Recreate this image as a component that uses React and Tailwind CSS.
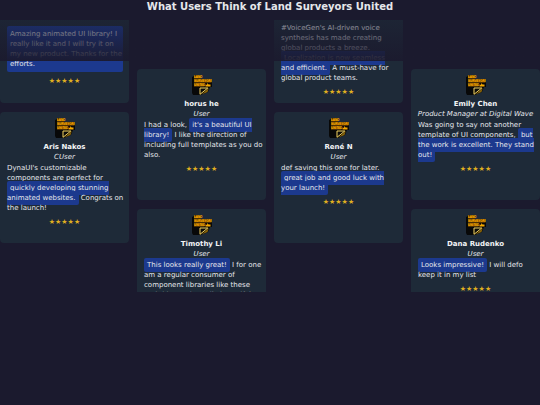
const Mark = ({ block = false, children }) => (
  <mark
    className={
      block
        ? "mt-[3px] mr-[-1px] block rounded-[2px] bg-blue-900 p-[3px] text-gray-200"
        : "rounded-[2px] bg-blue-900 p-[3px] text-gray-200"
    }
  >
    {children}
  </mark>
);

const columns = [
  {
    id: "first",
    raised: true,
    reviews: [
      {
        id: "animated-library",
        body: (
          <Mark block>
            Amazing animated UI library! I<br />
            really like it and I will try it on<br />
            my new product. Thanks for the<br />
            efforts.
          </Mark>
        )
      },
      {
        id: "aris",
        name: "Aris Nakos",
        role: "CUser",
        body: (
          <>
            DynaUI's customizable<br />
            components are perfect for<br />
            <Mark>
              quickly developing stunning<br />
              animated websites.
            </Mark>{" "}
            Congrats on<br />
            the launch!
          </>
        )
      }
    ]
  },
  {
    id: "second",
    raised: false,
    reviews: [
      {
        id: "horus",
        name: "horus he",
        role: "User",
        body: (
          <>
            I had a look,{" "}
            <Mark>
              it's a beautiful UI<br />
              library!
            </Mark>{" "}
            I like the direction of<br />
            including full templates as you do<br />
            also.
          </>
        )
      },
      {
        id: "timothy",
        name: "Timothy Li",
        role: "User",
        body: (
          <>
            <Mark>This looks really great!</Mark> I for one<br />
            am a regular consumer of<br />
            component libraries like these<br />
            and this one is easily beautiful
          </>
        )
      }
    ]
  },
  {
    id: "third",
    raised: true,
    reviews: [
      {
        id: "voicegen",
        body: (
          <>
            #VoiceGen's AI-driven voice<br />
            synthesis has made creating<br />
            global products a breeze.<br />
            <Mark>
              Localization is now seamless<br />
              and efficient.
            </Mark>{" "}
            A must-have for<br />
            global product teams.
          </>
        )
      },
      {
        id: "rene",
        name: "René N",
        role: "User",
        body: (
          <>
            def saving this one for later.<br />
            <Mark>
              great job and good luck with<br />
              your launch!
            </Mark>
          </>
        )
      }
    ]
  },
  {
    id: "fourth",
    raised: false,
    reviews: [
      {
        id: "emily",
        name: "Emily Chen",
        role: "Product Manager at Digital Wave",
        body: (
          <>
            Was going to say not another<br />
            template of UI components,{" "}
            <Mark>
              but<br />
              the work is excellent. They stand<br />
              out!
            </Mark>
          </>
        )
      },
      {
        id: "dana",
        name: "Dana Rudenko",
        role: "User",
        body: (
          <>
            <Mark>Looks impressive!</Mark> I will defo<br />
            keep it in my list
          </>
        )
      }
    ]
  }
];

const Logo = () => (
  <svg viewBox="0 0 20 20" className="h-5 w-5" aria-hidden="true">
    <path d="M0 2L2 1V0H9V4H20V12H18L16 17L9 20H1L0 18Z" fill="#080808" />
    <path d="M2 0.5H9V3.5H2ZM2 4.5H19.5V7.5H2ZM2 8.5H12.5V11.5H2Z" fill="#8a5403" />
    <g fill="#ffb000" fontFamily="Liberation Sans" fontWeight="700" fontSize="3">
      <text x="2" y="3">LAND</text>
      <text x="2" y="7">SURVEYORS</text>
      <text x="2" y="11">UNITED</text>
    </g>
    <path d="M15.5 8L16.5 9.5H18.5V11.5H13.5V9.8H15Z" fill="#f5a800" />
    <path d="M16.8 13L15.5 17L9.5 19.5L16.8 13Z" fill="#8a6408" />
    <path d="M8 13H15.8L8 19.3Z" fill="#0a0a0a" stroke="#f4d360" strokeWidth="1" />
  </svg>
);

const ReviewCard = ({ review }) => (
  <article className="h-[131px] shrink-0 overflow-hidden rounded bg-[#1e2a38] px-[7px] pt-[6px] text-gray-200">
    <header className="flex h-[45px] flex-col items-center whitespace-nowrap">
      <Logo />
      {review.name ? (
        <>
          <h2 className="mt-1 font-bold text-gray-100">{review.name}</h2>
          <p className="italic">{review.role}</p>
        </>
      ) : null}
    </header>
    <div className="whitespace-nowrap">{review.body}</div>
    <p className="mt-1 text-center text-[#e0b020]" aria-label="5 out of 5 stars">
      ★★★★★
    </p>
  </article>
);

const App = () => {
  return (
    <main className="min-h-screen bg-[#1b1a2e] font-['DejaVu_Sans',sans-serif]">
      <h1 className="h-5 pt-px text-center text-[10px] leading-[12px] font-bold text-gray-200">
        What Users Think of Land Surveyors United
      </h1>
      <section className="relative grid h-[272px] grid-cols-4 gap-2 overflow-hidden text-[7px] leading-[10px]">
        {columns.map((column) => (
          <div
            key={column.id}
            className={column.raised ? "-mt-12 flex min-w-0 flex-col gap-[9px]" : "mt-[49px] flex min-w-0 flex-col gap-[9px]"}
          >
            {column.reviews.map((review) => (
              <ReviewCard key={review.id} review={review} />
            ))}
          </div>
        ))}
        <div className="pointer-events-none absolute inset-x-0 top-0 h-[41px] bg-linear-to-b from-[#1b1a2e]/35 to-[#1b1a2e]/95" />
      </section>
    </main>
  );
};

export default App;
